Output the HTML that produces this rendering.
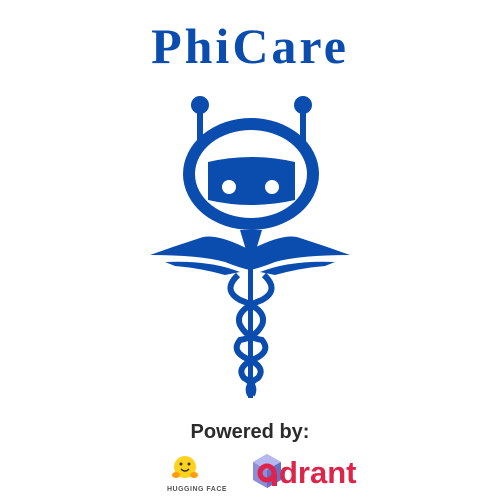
<!DOCTYPE html>
<html><head><style>
html,body{margin:0;padding:0;background:#fff;width:500px;height:500px;overflow:hidden;position:relative}
.t{position:absolute;left:0;width:500px;text-align:center;top:17px;font:bold 50px "Liberation Serif",serif;color:#0a4daf;letter-spacing:3px}
.p{position:absolute;left:0;width:500px;text-align:center;top:421px;font:bold 20px "Liberation Sans",sans-serif;color:#2b2b2b}
.hf{position:absolute;left:167px;top:486px;font:bold 7px "Liberation Sans",sans-serif;color:#555;letter-spacing:.5px}
.dr{position:absolute;left:279px;top:455px;font:bold 31px "Liberation Sans",sans-serif;color:#dc244c}
</style></head><body>
<div class="t">PhiCare</div>
<svg width="500" height="500" style="position:absolute;left:0;top:0">
<g fill="#0a4daf">
<circle cx="200" cy="105" r="9"/><circle cx="303" cy="105" r="9"/>
<rect x="197" y="105" width="6" height="40"/><rect x="300" y="105" width="6" height="40"/>
<ellipse cx="251" cy="174" rx="68" ry="56"/>
</g>
<ellipse cx="251" cy="174" rx="56" ry="44" fill="#fff"/>
<path d="M208 162 Q251 152 295 162 L295 200 Q251 210 208 200 Z" fill="#0a4daf"/>
<circle cx="229" cy="187" r="7" fill="#fff"/><circle cx="272" cy="187" r="7" fill="#fff"/>
<g fill="#0a4daf">
<path d="M240 230 L262 230 L256 250 L246 250 Z"/>
<path d="M250 250 Q215 232 200 238 Q175 246 150 255 Q200 255 225 262 Q240 268 250 270 Z"/>
<path d="M250 250 Q285 232 300 238 Q325 246 350 255 Q300 255 275 262 Q260 268 250 270 Z"/>
<path d="M165 262 Q210 260 240 272 L225 275 Q200 268 175 266Z"/>
<path d="M335 262 Q290 260 260 272 L275 275 Q300 268 325 266Z"/>
<rect x="248" y="250" width="5" height="148"/>
</g>
<g fill="none" stroke="#0a4daf" stroke-width="6">
<path d="M238 275 Q222 290 240 300 Q268 310 262 325 Q255 338 240 340 Q230 352 250 360 Q266 368 258 378 Q245 385 250 395"/>
<path d="M264 275 Q280 290 262 300 Q234 310 240 325 Q247 338 262 340 Q272 352 252 360 Q236 368 244 378 Q257 385 252 395"/>
</g>
<g transform="translate(185,467)">
<circle r="11" fill="#ffd21e"/>
<circle cx="-4" cy="-3" r="1.5" fill="#333"/><circle cx="4" cy="-3" r="1.5" fill="#333"/>
<path d="M-4 2 Q0 6 4 2" stroke="#333" fill="none" stroke-width="1.5"/>
<ellipse cx="-9" cy="8" rx="4" ry="3" fill="#ff9d0b"/><ellipse cx="9" cy="8" rx="4" ry="3" fill="#ff9d0b"/>
</g>
<g transform="translate(267,471)">
<polygon points="0,-17 14,-9 14,9 0,17 -14,9 -14,-9" fill="#8d8fd6"/>
<polygon points="0,-17 14,-9 0,-1 -14,-9" fill="#b5b8ee"/>
<polygon points="0,-1 14,-9 14,9 0,17" fill="#6b6fc4"/>
<circle cx="0" cy="2" r="7" fill="none" stroke="#dc244c" stroke-width="5"/>
<rect x="5" y="2" width="5" height="13" fill="#dc244c"/>
</g>
</svg>
<div class="p">Powered by:</div>
<div class="hf">HUGGING FACE</div>
<div class="dr">drant</div>
</body></html>
